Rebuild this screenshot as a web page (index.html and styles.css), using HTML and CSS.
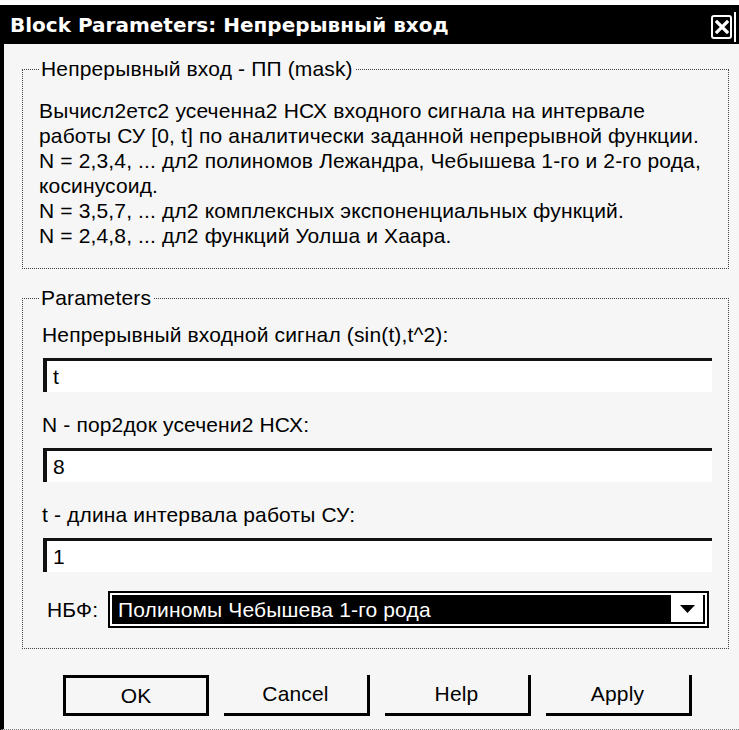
FILE: index.html
```html
<!DOCTYPE html>
<html lang="ru">
<head>
<meta charset="utf-8">
<title>Block Parameters: Непрерывный вход</title>
<link rel="stylesheet" href="styles.css">
</head>
<body>
<div class="window">
  <div class="titlebar">
    <span class="title">Block Parameters: Непрерывный вход</span>
    <span class="close">
      <svg width="14" height="14" viewBox="0 0 14 14"><path d="M2 2 L12 12 M12 2 L2 12" stroke="#fff" stroke-width="3.2" stroke-linecap="square"/></svg>
    </span>
    <span class="close-edge"></span>
  </div>

  <div class="client">
    <fieldset class="group group-desc">
      <legend>Непрерывный вход - ПП (mask)</legend>
      <div class="line">Вычисл2етс2 усеченна2 НСХ входного сигнала на интервале</div>
      <div class="line">работы СУ [0, t] по аналитически заданной непрерывной функции.</div>
      <div class="line">N = 2,3,4, ... дл2 полиномов Лежандра, Чебышева 1-го и 2-го рода,</div>
      <div class="line">косинусоид.</div>
      <div class="line">N = 3,5,7, ... дл2 комплексных экспоненциальных функций.</div>
      <div class="line">N = 2,4,8, ... дл2 функций Уолша и Хаара.</div>
    </fieldset>

    <fieldset class="group group-params">
      <legend>Parameters</legend>
      <div class="field">
        <div class="field-label">Непрерывный входной сигнал (sin(t),t^2):</div>
        <div class="edit">t</div>
      </div>
      <div class="field">
        <div class="field-label">N - пор2док усечени2 НСХ:</div>
        <div class="edit">8</div>
      </div>
      <div class="field">
        <div class="field-label">t - длина интервала работы СУ:</div>
        <div class="edit">1</div>
      </div>
      <div class="combo-row">
        <span class="combo-label">НБФ:</span>
        <div class="combo">
          <div class="combo-value">Полиномы Чебышева 1-го рода</div>
          <div class="combo-arrow">
            <svg width="15" height="8" viewBox="0 0 15 8"><polygon points="0,0 15,0 7.5,8" fill="#000"/></svg>
          </div>
        </div>
      </div>
    </fieldset>

    <div class="buttons">
      <div class="btn btn-default">OK</div>
      <div class="btn">Cancel</div>
      <div class="btn">Help</div>
      <div class="btn">Apply</div>
    </div>
  </div>
</div>
</body>
</html>
```

FILE: styles.css
```css
* {
  box-sizing: border-box;
}

body {
  margin: 0;
  background: #fff;
  font-family: "Liberation Sans", Arial, sans-serif;
  color: #000;
}

.window {
  width: 739px;
  height: 730px;
  padding-top: 5px;
  background: #fff;
}

/* caption bar */
.titlebar {
  height: 39px;
  background: #000;
  display: flex;
  align-items: center;
  padding-left: 10px;
  padding-right: 3px;
}

.title {
  color: #fff;
  font-family: "DejaVu Sans", sans-serif;
  font-weight: bold;
  font-size: 20px;
}

.close {
  margin-left: auto;
  margin-top: 4px;
  width: 21px;
  height: 24px;
  border: 2px solid #fff;
  border-radius: 3px;
  display: flex;
  align-items: center;
  justify-content: center;
}

.close-edge {
  width: 2px;
  height: 30px;
  margin-left: 2px;
  margin-top: 4px;
  background: #fff;
}

/* dialog body */
.client {
  height: 686px;
  border-left: 4px solid #000;
  border-bottom: 1px dotted #777;
  background: #f6f6f6;
  padding: 15px 10px 0 18px;
  font-size: 21px;
  letter-spacing: 0.15px;
}

.group {
  margin: 0;
  min-width: 0;
  border: 1px dotted #444;
}

.group legend {
  font-size: 21px;
  line-height: 20px;
  padding: 0 2px;
}

.group-desc {
  padding: 19px 16px 20px 16px;
}

.line {
  line-height: 25px;
  white-space: nowrap;
}

.group-params {
  margin-top: 19px;
  padding: 13px 16px 20px 20px;
}

.group-params legend {
  margin-left: -4px;
}

.field {
  margin-bottom: 19px;
}

.field-label {
  line-height: 27px;
  white-space: nowrap;
  margin-left: -1px;
}

.edit {
  margin-top: 10px;
  height: 34px;
  background: #fff;
  border-top: 3px solid #111;
  border-left: 4px solid #111;
  padding: 3px 0 0 6px;
  line-height: 26px;
}

.field:last-of-type {
  margin-bottom: 16px;
}

.combo-row {
  display: flex;
  align-items: center;
  margin-right: 3px;
}

.combo-label {
  width: 65px;
  padding-left: 4px;
}

.combo {
  flex: 1;
  height: 37px;
  display: flex;
  border: 2px solid #000;
  background: #fff;
  padding: 2px;
}

.combo-value {
  flex: 1;
  background: #000;
  color: #fff;
  padding-left: 6px;
  line-height: 29px;
  white-space: nowrap;
}

.combo-arrow {
  width: 34px;
  background: #fff;
  border-right: 2px solid #000;
  border-bottom: 2px solid #000;
  display: flex;
  align-items: center;
  justify-content: center;
}

/* push buttons */
.buttons {
  display: flex;
  gap: 15px;
  margin-top: 26px;
  padding-left: 41px;
}

.btn {
  width: 146px;
  height: 41px;
  display: flex;
  align-items: center;
  justify-content: center;
  font-size: 21px;
  border-right: 3px solid #000;
  border-bottom: 3px solid #000;
}

.btn-default {
  border: 3px solid #000;
}
```
